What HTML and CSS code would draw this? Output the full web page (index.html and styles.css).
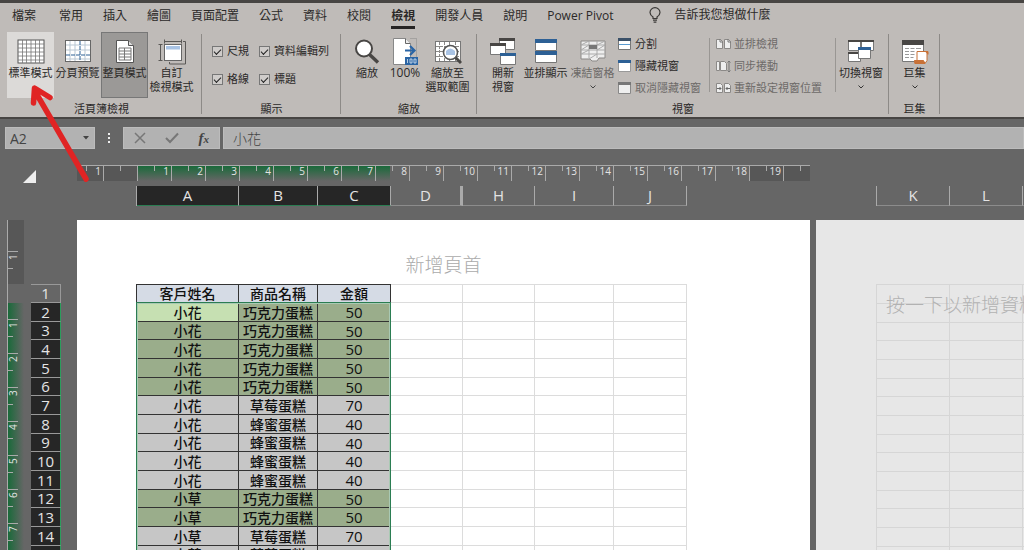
FILE: index.html
```html
<!DOCTYPE html>
<html lang="zh-Hant">
<head>
<meta charset="utf-8">
<title>活頁簿</title>
<link rel="stylesheet" href="styles.css">
</head>
<body>
<nav class="tabs">
  <button class="tab tab-file">檔案</button>
  <button class="tab">常用</button>
  <button class="tab">插入</button>
  <button class="tab">繪圖</button>
  <button class="tab">頁面配置</button>
  <button class="tab">公式</button>
  <button class="tab">資料</button>
  <button class="tab">校閱</button>
  <button class="tab tab-active">檢視</button>
  <button class="tab">開發人員</button>
  <button class="tab">說明</button>
  <button class="tab">Power Pivot</button>
  <button class="tab tell-me">
    <svg width="12" height="16" viewBox="0 0 12 16" fill="none" stroke="#3a3836" stroke-width="1.2"><path d="M4 11.5V10C2.400 8.800 1 7.400 1 5.400A5 4.700 0 0 1 11 5.400C11 7.400 9.600 8.800 8 10v1.500zM4 13.200h4M4.600 15.200h2.800"/></svg>
    告訴我您想做什麼
  </button>
</nav>

<section class="ribbon">
  <div class="group group-views">
    <div class="tools">
      <button class="tool tool-hover">
        <svg width="28" height="26" viewBox="0 0 28 26"><rect x="1" y="1" width="26" height="23" fill="#fff" stroke="#555"/><path d="M5.500 1v23M9.500 1v23M14 1v23M18.500 1v23M22.500 1v23M1 5h26M1 9h26M1 13h26M1 17h26M1 21h26" stroke="#777" stroke-width=".8"/></svg>
        <span>標準模式</span>
      </button>
      <button class="tool">
        <svg width="28" height="26" viewBox="0 0 28 26"><rect x="1.500" y="1.500" width="25" height="21" fill="#fff" stroke="#666"/><path d="M6 2v20M11 2v20M21 2v20M2 6h24M2 11h24M2 20h24" stroke="#b9c7d3"/><path d="M16 2v20M2 16h24" stroke="#2d6095" stroke-dasharray="4 1"/></svg>
        <span>分頁預覽</span>
      </button>
      <button class="tool tool-pressed">
        <svg width="28" height="26" viewBox="0 0 28 26"><path d="M5.500 1.500h12l5 5v17h-17z" fill="#fff" stroke="#555"/><path d="M17.500 1.500v5h5" fill="#ddd" stroke="#555"/><path d="M8 9h12v12H8zM8 12h12M8 15h12M8 18h12M13.500 9v12" fill="none" stroke="#777"/></svg>
        <span>整頁模式</span>
      </button>
      <button class="tool">
        <svg width="28" height="26" viewBox="0 0 28 26"><rect x="6.500" y="5.500" width="17" height="16" fill="#fff" stroke="#666"/><rect x="8" y="7" width="14" height="3.500" fill="#a9c3e4"/><path d="M6.500 2.500h17M6.500.500v4M23.500.500v4M2.500 5.500v16M.500 5.500h4M.500 21.500h4M25 2.500h2.500V25h-16v-2" fill="none" stroke="#5a5856"/></svg>
        <span>自訂<br>檢視模式</span>
      </button>
    </div>
    <h2 class="caption">活頁簿檢視</h2>
  </div>

  <div class="group group-show">
    <div class="checks">
      <label><input type="checkbox" checked>尺規</label>
      <label><input type="checkbox" checked>資料編輯列</label>
      <label><input type="checkbox" checked>格線</label>
      <label><input type="checkbox" checked>標題</label>
    </div>
    <h2 class="caption">顯示</h2>
  </div>

  <div class="group group-zoom">
    <div class="tools">
      <button class="tool tool-small">
        <svg width="28" height="26" viewBox="0 0 28 26"><path d="M16 15l9 8.500" stroke="#484644" stroke-width="3.400"/><circle cx="11" cy="9.500" r="8" fill="#fff" stroke="#484644" stroke-width="2"/></svg>
        <span>縮放</span>
      </button>
      <button class="tool tool-small">
        <svg width="28" height="28" viewBox="0 0 28 28"><path d="M2.500.500h12l5 5v21h-17z" fill="#fff" stroke="#888"/><path d="M14.500.500v5h5" fill="#eee" stroke="#666"/><path d="M19.500.500h6v19" fill="none" stroke="#888" stroke-dasharray="1 1"/><path d="M14 12.500h9M19 8l4.500 4.500L19 17" fill="none" stroke="#2a65a5" stroke-width="2.200"/><path d="M14 19h13v8H14z" fill="#2a65a5"/><path d="M16.500 21v4M19 21h2v4h-2zM23 21h2v4h-2z" fill="none" stroke="#d9e6f3" stroke-width=".8"/></svg>
        <span class="percent">100%</span>
      </button>
      <button class="tool">
        <svg width="28" height="26" viewBox="0 0 28 26"><rect x="1.500" y="2.500" width="25" height="20" fill="#fff" stroke="#777"/><path d="M5.500 3v19M10.500 3v19M15.500 3v19M21.500 3v19M2 7.500h24M2 12.500h24M2 17.500h24" stroke="#8b8987" stroke-dasharray="3 1"/><path d="M21 18l6 6" stroke="#484644" stroke-width="3"/><circle cx="16.500" cy="13.500" r="7" fill="#fff" stroke="#555" stroke-width="1.600"/><path d="M12 12q4-5 9 0v4h-9z" fill="#a9c3e4"/></svg>
        <span>縮放至<br>選取範圍</span>
      </button>
    </div>
    <h2 class="caption">縮放</h2>
  </div>

  <div class="group group-window">
    <div class="tools">
      <button class="tool tool-small">
        <svg width="28" height="28" viewBox="0 0 28 28"><g fill="#fff" stroke="#777"><path d="M10.500.500h15v11h-15z"/><path d="M1.500 5.500h15v11h-15z"/><path d="M11.500 15.500h15v11h-15z"/></g><path d="M10 0h16v3H10zM1 5h16v3H1z" fill="#484644"/><path d="M11 15h16v3H11z" fill="#2d6095"/></svg>
        <span>開新<br>視窗</span>
      </button>
      <button class="tool">
        <svg width="28" height="26" viewBox="0 0 28 26"><path d="M3.500.500h21v11h-21zM3.500 12.500h21v11h-21z" fill="#fff" stroke="#777"/><path d="M3 0h22v4H3zM3 12h22v4H3z" fill="#2d6095"/></svg>
        <span>並排顯示</span>
      </button>
      <button class="tool tool-disabled">
        <svg width="28" height="26" viewBox="0 0 28 26"><path d="M2 2h24v17h-6l-2 3h-5l-2-2H2z" fill="#eee" stroke="#8b8987"/><path d="M2 6h24M2 11h24M2 15h24M10 2v17M18 2v17M2 6l8-4M2 11l8-5M2 15l8-4M18 6l8-4M18 11l8-5M10 20l8-5" stroke="#aaa" fill="none"/><path d="M10 6h8v4h-8z" fill="#777"/></svg>
        <span>凍結窗格</span>
        <svg class="chevron" width="6" height="4" viewBox="0 0 6 4"><path d="M.5.5L3 3l2.500-2.500" fill="none" stroke="#444"/></svg>
      </button>
      <div class="stack">
        <button class="row-tool"><svg width="13" height="13" viewBox="0 0 13 13"><path d="M.5.500h12v11H.500z" fill="#fff" stroke="#777"/><path d="M0 0h13v3H0z" fill="#3a5068"/><path d="M1 6.500h11" stroke="#5a9bd0"/></svg>分割</button>
        <button class="row-tool"><svg width="13" height="13" viewBox="0 0 13 13"><path d="M.5.500h12v11H.500z" fill="#fff" stroke="#999"/><path d="M0 0h13v3H0z" fill="#2d6095"/></svg>隱藏視窗</button>
        <button class="row-tool tool-disabled"><svg width="13" height="13" viewBox="0 0 13 13"><path d="M.5.500h12v11H.500z" fill="#eee" stroke="#888"/><path d="M0 0h13v3H0z" fill="#777"/></svg>取消隱藏視窗</button>
      </div>
      <div class="stack stack-divided">
        <button class="row-tool tool-disabled"><svg width="15" height="13" viewBox="0 0 15 13"><path d="M.5 1.500h4l2 2v7h-6zM8.500 1.500h4l2 2v7h-6z" fill="#eee" stroke="#8b8987"/><path d="M4 1v3h3M12 1v3h3" fill="none" stroke="#777"/></svg>並排檢視</button>
        <button class="row-tool tool-disabled"><svg width="15" height="13" viewBox="0 0 15 13"><path d="M.5 1.500h3v9h-3zM4.500 1.500h4l2 2v7h-6z" fill="#eee" stroke="#8b8987"/><path d="M13 1v11M11.500 2.500L13 1l1.500 1.500M11.500 10.500L13 12l1.500-1.500" fill="none" stroke="#777"/></svg>同步捲動</button>
        <button class="row-tool tool-disabled"><svg width="15" height="13" viewBox="0 0 15 13"><path d="M.5 1.500h4l2 2v7h-6zM8.500 1.500h4l2 2v7h-6z" fill="#eee" stroke="#8b8987"/><path d="M1 6.500h4M3.500 5L5 6.500 3.500 8M14 6.500h-4M11.500 5L10 6.500 11.500 8" fill="none" stroke="#666"/></svg>重新設定視窗位置</button>
      </div>
      <button class="tool tool-switch">
        <svg width="28" height="26" viewBox="0 0 28 26"><path d="M1.500 1.500h12v10h-12zM14.500 1.500h12v10h-12zM1.500 13.500h12v9h-12z" fill="#fff" stroke="#777"/><path d="M1 1h26v2H1zM1 13h13v2H1z" fill="#484644"/><path d="M11.500 8.500h12v11h-12z" fill="#fff" stroke="#777"/><path d="M11 8h13v3H11z" fill="#2d6095"/></svg>
        <span>切換視窗</span>
        <svg class="chevron" width="6" height="4" viewBox="0 0 6 4"><path d="M.5.5L3 3l2.500-2.500" fill="none" stroke="#333"/></svg>
      </button>
    </div>
    <h2 class="caption">視窗</h2>
  </div>

  <div class="group group-macro">
    <div class="tools">
      <button class="tool">
        <svg width="28" height="26" viewBox="0 0 28 26"><path d="M1.500 1.500h21v21h-21z" fill="#fff" stroke="#777"/><path d="M1 1h22v5H1z" fill="#484644"/><path d="M4 9.500h4M9.500 9.500h4M15 9.500h5M4 12.500h4M9.500 12.500h4M4 15.500h4M9.500 15.500h4M4 18.500h4M9.500 18.500h3" stroke="#999"/><path d="M16 12.500h10v9l-2 3H14v-3h2z" fill="#fff" stroke="#c87137"/><path d="M13.500 21.500h9l1.500 3H14zM24 12.500h3v3" fill="#c87137" stroke="#c87137"/></svg>
        <span>巨集</span>
        <svg class="chevron" width="6" height="4" viewBox="0 0 6 4"><path d="M.5.5L3 3l2.500-2.500" fill="none" stroke="#333"/></svg>
      </button>
    </div>
    <h2 class="caption">巨集</h2>
  </div>
</section>

<section class="formula-bar">
  <div class="name-box">
    <input aria-label="名稱方塊" value="A2">
    <button aria-label="展開"><svg width="6" height="4" viewBox="0 0 6 4"><path d="M0 0h6L3 3.500z" fill="#444"/></svg></button>
  </div>
  <svg class="grip" width="4" height="12" viewBox="0 0 4 12"><path d="M1 1h2v2H1zM1 5h2v2H1zM1 9h2v2H1z" fill="#eee"/></svg>
  <div class="formula-actions">
    <button aria-label="取消"><svg width="12" height="12" viewBox="0 0 12 12"><path d="M1 1l10 10M11 1L1 11" stroke="#777" stroke-width="1.500"/></svg></button>
    <button aria-label="輸入"><svg width="14" height="12" viewBox="0 0 14 12"><path d="M1 6l4 4 8-8.500" fill="none" stroke="#777" stroke-width="2"/></svg></button>
    <button class="fx" aria-label="插入函數">f<small>x</small></button>
  </div>
  <input class="formula" aria-label="資料編輯列" value="小花">
</section>

<main class="workspace">
  <div class="top-rulers">
    <button class="select-all" aria-label="全選"><svg width="13" height="13" viewBox="0 0 13 13"><path d="M13 0v13H0z" fill="#eee"/></svg></button>
    <div class="strips">
      <div class="ruler">
        <span class="first">1</span><span></span><span>1</span><span>2</span><span>3</span><span>4</span><span>5</span><span>6</span><span>7</span><span>8</span><span>9</span><span>10</span><span>11</span><span>12</span><span>13</span><span>14</span><span>15</span><span>16</span><span>17</span><span>18</span><span>19</span><span class="last"></span>
      </div>
      <div class="column-heads">
        <div class="heads heads-main">
          <span class="picked">A</span><span class="picked">B</span><span class="picked">C</span><span class="before-hidden">D</span><span>H</span><span>I</span><span>J</span>
        </div>
        <div class="heads heads-next"><span>K</span><span>L</span><span></span></div>
      </div>
    </div>
  </div>

  <div class="sheet">
    <div class="side-ruler">
      <span class="top"></span><span>1</span><span></span><span>1</span><span>2</span><span>3</span><span>4</span><span>5</span><span>6</span><span>7</span>
    </div>
    <div class="row-heads">
      <span>1</span><span>2</span><span>3</span><span>4</span><span>5</span><span>6</span><span>7</span><span>8</span><span>9</span><span>10</span><span>11</span><span>12</span><span>13</span><span>14</span><span></span>
    </div>
    <div class="page">
      <p class="page-header">新增頁首</p>
      <div class="grid-area">
        <table class="cells">
          <colgroup><col class="w-a"><col class="w-b"><col class="w-c"><col class="w-d"><col class="w-d"><col class="w-b"><col class="w-c"></colgroup>
          <thead><tr><th>客戶姓名</th><th>商品名稱</th><th>金額</th><td></td><td></td><td></td><td></td></tr></thead>
          <tbody>
            <tr class="green"><td class="active">小花</td><td>巧克力蛋糕</td><td>50</td><td></td><td></td><td></td><td></td></tr>
            <tr class="green"><td>小花</td><td>巧克力蛋糕</td><td>50</td><td></td><td></td><td></td><td></td></tr>
            <tr class="green"><td>小花</td><td>巧克力蛋糕</td><td>50</td><td></td><td></td><td></td><td></td></tr>
            <tr class="green"><td>小花</td><td>巧克力蛋糕</td><td>50</td><td></td><td></td><td></td><td></td></tr>
            <tr class="green"><td>小花</td><td>巧克力蛋糕</td><td>50</td><td></td><td></td><td></td><td></td></tr>
            <tr><td>小花</td><td>草莓蛋糕</td><td>70</td><td></td><td></td><td></td><td></td></tr>
            <tr><td>小花</td><td>蜂蜜蛋糕</td><td>40</td><td></td><td></td><td></td><td></td></tr>
            <tr><td>小花</td><td>蜂蜜蛋糕</td><td>40</td><td></td><td></td><td></td><td></td></tr>
            <tr><td>小花</td><td>蜂蜜蛋糕</td><td>40</td><td></td><td></td><td></td><td></td></tr>
            <tr><td>小花</td><td>蜂蜜蛋糕</td><td>40</td><td></td><td></td><td></td><td></td></tr>
            <tr class="green"><td>小草</td><td>巧克力蛋糕</td><td>50</td><td></td><td></td><td></td><td></td></tr>
            <tr class="green"><td>小草</td><td>巧克力蛋糕</td><td>50</td><td></td><td></td><td></td><td></td></tr>
            <tr><td>小草</td><td>草莓蛋糕</td><td>70</td><td></td><td></td><td></td><td></td></tr>
            <tr><td>小草</td><td>草莓蛋糕</td><td>70</td><td></td><td></td><td></td><td></td></tr>
          </tbody>
        </table>
        <div class="selection"></div>
      </div>
    </div>
    <div class="page page-next">
      <div class="grid-area">
        <div class="blank-grid">
          <i></i><i></i><i></i><i></i><i></i><i></i><i></i><i></i><i></i><i></i><i></i><i></i><i></i><i></i><i></i>
        </div>
        <p class="add-data">按一下以新增資料</p>
      </div>
    </div>
  </div>
</main>

<svg class="pointer-arrow" width="64" height="100" viewBox="0 0 64 100"><path d="M60 97L10 11M7.500 21L8.500 6 24 15.500" fill="none" stroke="#e02424" stroke-width="5.500" stroke-linecap="round" stroke-linejoin="round"/></svg>
</body>
</html>
```
FILE: styles.css
```css
* { box-sizing: border-box; }

body {
  margin: 0;
  height: 100vh;
  display: flex;
  flex-direction: column;
  overflow: hidden;
  position: relative;
  border-top: 3px solid #474543;
  background: #666;
  color: #2b2928;
  font-family: "Open Sans", "Noto Sans CJK TC", sans-serif;
  font-size: 11px;
}

button, input { font: inherit; color: inherit; border: 0; background: none; padding: 0; margin: 0; }
p, h2 { margin: 0; font-weight: 400; }
svg { display: block; flex: none; }

/* Tabs */
.tabs {
  display: flex;
  gap: 20px;
  padding: 0 12px;
  height: 27px;
  background: #bfbbb8;
  font-size: 12px;
}
.tab { height: 26px; line-height: 26px; white-space: nowrap; border-bottom: 3px solid transparent; }
.tab-file { margin-right: 3px; }
.tab-active { font-weight: 700; border-bottom-color: #262424; }
.tell-me { display: flex; align-items: center; gap: 13px; margin-left: 16px; }

/* Ribbon */
.ribbon {
  display: flex;
  padding-top: 2px;
  background: #bfbbb8;
  border-bottom: 2px solid #474543;
}
.group {
  display: flex;
  flex-direction: column;
  gap: 3px;
  background: linear-gradient(#8d8a87, #8d8a87) right 2px / 1px 80px no-repeat;
}
.group-views { width: 202px; padding: 0 6px 0 7px; }
.group-show { width: 139px; padding: 0 10px; }
.group-zoom { width: 136px; padding: 0 7px; }
.group-window { width: 412px; padding: 0 7px; }
.group-macro { width: 51px; padding: 0 2px; }
.caption { font-size: 11px; line-height: 16px; text-align: center; }
.tools, .checks { height: 66px; }
.tools { display: flex; }
.tool {
  width: 47px;
  flex: none;
  height: 66px;
  padding-top: 5px;
  display: flex;
  flex-direction: column;
  align-items: center;
  line-height: 14px;
  white-space: nowrap;
  border: 1px solid transparent;
}
.tool > svg:first-child { height: 28px; }
.tool-small { width: 38px; }
.percent { font-size: 12px; }
.tool-hover { background: #dcdad8; }
.tool-pressed { background: #9b9997; border-color: #777; }
.tool-disabled { color: #6d6a68; }
.chevron { margin-top: 5px; }
.checks {
  display: grid;
  grid-template-columns: 47px auto;
  row-gap: 12px;
  align-content: start;
  padding: 11px 0 0 0;
}
.checks label { display: flex; align-items: center; gap: 4px; line-height: 16px; white-space: nowrap; }
.checks input {
  appearance: none;
  width: 11px;
  height: 11px;
  border: 1px solid #777;
  background: #cfccca;
  display: grid;
  place-items: center;
}
.checks input:checked::after {
  content: "";
  width: 6px;
  height: 3px;
  border-left: 1px solid #222;
  border-bottom: 1px solid #222;
  transform: rotate(-45deg);
}
.stack { display: flex; flex-direction: column; gap: 6px; padding: 4px 0 0 2px; width: 88px; flex: none; }
.stack-divided {
  width: 132px;
  padding-left: 12px;
  background:
    linear-gradient(#999693, #999693) 5px 6px / 1px 54px no-repeat,
    linear-gradient(#999693, #999693) right 6px / 1px 54px no-repeat;
}
.row-tool { display: flex; align-items: center; gap: 4px; line-height: 16px; white-space: nowrap; }
.stack-divided .row-tool { gap: 3px; }
.row-tool svg { height: 13px; }
.tool-switch { width: 50px; }

/* Formula bar */
.formula-bar { display: flex; align-items: center; height: 38px; padding-left: 5px; color: #444; }
.name-box, .formula-actions, .formula { height: 22px; background: #b2b2b2; border: 1px solid #bcbcbc; }
.name-box { display: flex; width: 90px; padding: 0 5px 0 4px; }
.name-box input { flex: 1; min-width: 0; font-size: 14px; }
.grip { margin: 0 12px; }
.formula-actions { display: flex; align-items: center; justify-content: space-between; width: 97px; padding: 0 10px; }
.fx { font: italic 700 15px/16px "Liberation Serif", serif; }
.fx small { font-size: 11px; }
.formula { flex: 1; min-width: 0; margin-left: 3px; padding-left: 9px; font-size: 14px; font-weight: 300; }

/* Rulers and headings */
.workspace { flex: 1; min-height: 0; display: flex; flex-direction: column; overflow: hidden; color: #e4e4e4; }
.top-rulers { display: flex; padding-top: 8px; height: 63px; flex: none; }
.select-all { width: 77px; height: 20px; padding: 3px 0 0 23px; }
.strips { flex: 1; min-width: 0; }
.ruler {
  display: flex;
  width: 733px;
  height: 16px;
  border-top: 1px solid #aaa;
  font-size: 10px;
  line-height: 11px;
  background:
    linear-gradient(#575757, #575757) left / 60px 100% no-repeat,
    linear-gradient(#575757, #575757) right / 60px 100% no-repeat,
    linear-gradient(#1a6a3a, #666) 60px 0 / 253px 100% no-repeat;
}
.ruler span {
  width: 34px;
  padding-right: 2px;
  text-align: right;
  border-right: 1px solid #aaa;
  background: linear-gradient(#aaa, #aaa) right 16px top / 1px 5px no-repeat;
}
.ruler .first { width: 27px; }
.ruler .last { width: 26px; border: 0; background-position: 16px 0; }
.column-heads { display: flex; padding-top: 5px; }
.heads { display: flex; font-size: 15px; line-height: 18px; text-align: center; border-left: 1px solid #aaa; }
.heads span { height: 20px; border-right: 1px solid #aaa; border-bottom: 1px solid #8c8c8c; }
.heads .picked { background: #262626; border-bottom-color: #2b7d52; }
.heads .before-hidden { border-right: 3px solid #aaa; }
.heads-main { margin-left: 59px; }
.heads-main span:nth-child(1) { width: 102px; }
.heads-main span:nth-child(2), .heads-main span:nth-child(6) { width: 79px; }
.heads-main span:nth-child(3), .heads-main span:nth-child(7) { width: 73px; }
.heads-main span:nth-child(4), .heads-main span:nth-child(5) { width: 72px; }
.heads-next { margin-left: 189px; overflow: hidden; }
.heads-next span { width: 73px; flex: none; }

/* Sheet body */
.sheet { flex: 1; min-height: 0; display: flex; align-items: stretch; }
.side-ruler {
  width: 17px;
  margin-left: 7px;
  border-left: 1px solid #aaa;
  font-size: 10px;
  line-height: 10px;
  background:
    linear-gradient(#575757, #575757) 0 0 / 100% 64px no-repeat,
    linear-gradient(90deg, #1a6a3a, #666) 0 83px / 100% 500px no-repeat;
}
.side-ruler span {
  display: block;
  height: 34px;
  writing-mode: vertical-rl;
  transform: rotate(180deg);
  text-align: right;
  padding-bottom: 2px;
  border-bottom: 1px solid #aaa;
  background: linear-gradient(#aaa, #aaa) right 16px / 5px 1px no-repeat;
}
.side-ruler .top { height: 31px; border: 0; }
.row-heads { width: 30px; margin: 64px 16px 0 7px; font-size: 15px; line-height: 18px; text-align: center; }
.row-heads span {
  display: block;
  height: 19px;
  background: #262626;
  border-right: 1px solid #2b9d5c;
  border-bottom: 1px solid #999;
}
.row-heads span:nth-child(3n) { height: 18px; line-height: 17px; }
.row-heads span:first-child { background: none; border-color: #999; border-top: 1px solid #999; line-height: 17px; }

.page { width: 733px; flex: none; background: #fff; color: #111; }
.page-header { height: 64px; padding-top: 33px; font-size: 19px; line-height: 24px; text-align: center; font-weight: 300; color: #aaa; }
.grid-area { position: relative; margin-left: 59px; }
.cells {
  width: 551px;
  table-layout: fixed;
  border-collapse: separate;
  border-spacing: 0;
  border-left: 1px solid #333;
  font-size: 14px;
  line-height: 17px;
  text-align: center;
}
.w-a { width: 102px; }
.w-b { width: 79px; }
.w-c { width: 73px; }
.w-d { width: 72px; }
.cells tr { height: 19px; }
.cells tr:nth-child(3n + 2) { height: 18px; }
.cells tbody tr:nth-child(3n + 2) td { line-height: 16px; }
.cells td, .cells th {
  padding: 0;
  height: 18px;
  overflow: hidden;
  white-space: nowrap;
  border-right: 1px solid #dcdcdc;
  border-bottom: 1px solid #dcdcdc;
  font-weight: 500;
}
.cells thead th, .cells thead td { border-top: 1px solid #dcdcdc; line-height: 16px; }
.cells thead th { background: #d5dbe5; border-color: #333; }
.cells tbody td:nth-child(-n + 3) { background: #c6c6c6; border-color: #333; }
.cells tbody td:nth-child(3) { font-size: 15px; }
.cells tbody .green td:nth-child(-n + 3) { background: #9aad8b; }
.cells tbody .green td.active { background: #c6e0b2; }
.selection {
  position: absolute;
  left: 0;
  top: 18px;
  bottom: 0;
  width: 255px;
  border: 1px solid #2b7d52;
  box-shadow: inset 0 0 0 1px #a9c9b3;
}

.page-next { flex: 1; width: auto; min-width: 0; margin-left: 6px; padding-top: 64px; overflow: hidden; background: #e7e7e7; }
.blank-grid {
  width: 220px;
  border: 1px solid #d6d6d6;
  border-bottom: 0;
  background: repeating-linear-gradient(90deg, transparent 0 72px, #d6d6d6 72px 73px);
}
.blank-grid i { display: block; height: 19px; border-bottom: 1px solid #d6d6d6; }
.blank-grid i:nth-child(3n) { height: 18px; }
.page-next .grid-area { margin-left: 60px; }
.add-data { position: absolute; left: 10px; top: 8px; white-space: nowrap; font-size: 19px; line-height: 26px; font-weight: 300; color: #b2b2b2; }

/* Annotation */
.pointer-arrow { position: absolute; left: 26px; top: 79px; pointer-events: none; }
```
